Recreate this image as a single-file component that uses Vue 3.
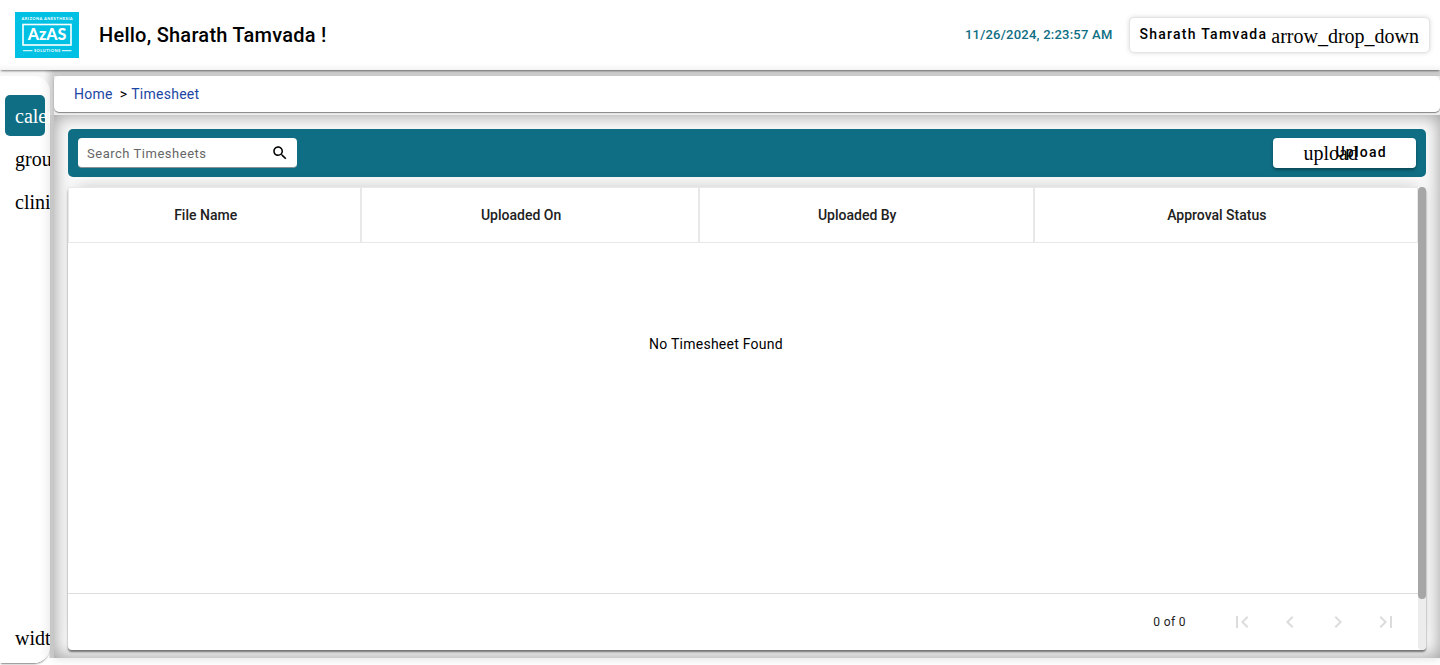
<script setup>
import { ref } from 'vue'

const userName = 'Sharath Tamvada'
const timestamp = '11/26/2024, 2:23:57 AM'
const search = ref('')
const navItems = [
  { icon: 'calendar_month', active: true },
  { icon: 'groups', active: false },
  { icon: 'clinical_notes', active: false },
]
const columns = [
  { label: 'File Name', key: 'file' },
  { label: 'Uploaded On', key: 'on' },
  { label: 'Uploaded By', key: 'by' },
  { label: 'Approval Status', key: 'status' },
]
const pagerButtons = [
  { label: 'First page', d: 'M18.41 16.59L13.82 12l4.59-4.59L17 6l-6 6 6 6zM6 6h2v12H6z' },
  { label: 'Previous page', d: 'M15.41 7.41L14 6l-6 6 6 6 1.41-1.41L10.83 12z' },
  { label: 'Next page', d: 'M10 6L8.59 7.41 13.17 12l-4.58 4.59L10 18l6-6z' },
  { label: 'Last page', d: 'M5.59 7.41L10.18 12l-4.59 4.59L7 18l6-6-6-6zM16 6h2v12h-2z' },
]
</script>

<template>
  <div class="page">
    <header class="topbar">
      <svg class="logo" viewBox="0 0 64 46" role="img" aria-label="AzAS">
        <rect width="64" height="46" fill="#00c0e4" />
        <rect x="8" y="12.5" width="48" height="20.5" fill="none" stroke="#fff" stroke-width="1.6" />
        <text x="32.300" y="8.400" text-anchor="middle" class="logo-small">ARIZONA ANESTHESIA</text>
        <text x="32" y="28.300" text-anchor="middle" class="logo-main">AzAS</text>
        <text x="32.300" y="40" text-anchor="middle" class="logo-small">SOLUTIONS</text>
        <path d="M8 38.700h9.500M47 38.700h9.500" stroke="#fff" stroke-width="1" />
      </svg>
      <h1 class="greeting">Hello, {{ userName }} !</h1>
      <time class="clock">{{ timestamp }}</time>
      <button class="user" type="button">
        <span>{{ userName }}</span>
        <span class="ligature">arrow_drop_down</span>
      </button>
    </header>

    <div class="body">
      <nav class="sidebar" aria-label="Main">
        <button
          v-for="item in navItems"
          :key="item.icon"
          type="button"
          class="nav-item ligature"
          :class="{ active: item.active }"
        >{{ item.icon }}</button>
        <button type="button" class="nav-item nav-toggle ligature">width</button>
      </nav>

      <main class="main">
        <nav class="crumbs" aria-label="Breadcrumb">
          <a href="#home">Home</a>
          <span>&gt;</span>
          <a href="#timesheet">Timesheet</a>
        </nav>

        <section class="panel">
          <div class="toolbar">
            <label class="search">
              <input v-model="search" type="text" placeholder="Search Timesheets" aria-label="Search Timesheets" />
              <svg viewBox="0 0 24 24" aria-hidden="true">
                <path d="M15.500 14h-.79l-.28-.27C15.410 12.590 16 11.110 16 9.500 16 5.910 13.090 3 9.500 3S3 5.910 3 9.500 5.910 16 9.500 16c1.610 0 3.090-.59 4.230-1.570l.27.28v.79l5 4.990L20.490 19l-4.990-5zm-6 0C7.010 14 5 11.990 5 9.500S7.010 5 9.500 5 14 7.010 14 9.500 11.990 14 9.500 14z" />
              </svg>
            </label>
            <button class="upload" type="button">
              <span class="upload-icon ligature">upload</span>
              <span>Upload</span>
            </button>
          </div>

          <div class="card">
            <div class="card-content">
              <div class="table-area">
                <table>
                  <colgroup>
                    <col v-for="c in columns" :key="c.key" :class="'col-' + c.key" />
                  </colgroup>
                  <thead>
                    <tr>
                      <th v-for="c in columns" :key="c.key" scope="col">{{ c.label }}</th>
                    </tr>
                  </thead>
                </table>
                <p class="empty">No Timesheet Found</p>
              </div>
              <footer class="pager">
                <span class="range">0 of 0</span>
                <button v-for="b in pagerButtons" :key="b.label" type="button" disabled :aria-label="b.label">
                  <svg viewBox="0 0 24 24" aria-hidden="true"><path :d="b.d" /></svg>
                </button>
              </footer>
            </div>
            <div class="track"><div class="thumb"></div></div>
          </div>
        </section>
      </main>
    </div>
  </div>
</template>

<style>
body {
  background: #fff;
}
</style>

<style scoped>
.page {
  box-sizing: border-box;
  height: 100vh;
  display: flex;
  flex-direction: column;
  overflow: hidden;
  font-family: Roboto, "Liberation Sans", sans-serif;
  color: #000;
}
.page * {
  box-sizing: border-box;
}
button {
  border: 0;
  padding: 0;
  margin: 0;
  background: none;
  font: inherit;
  color: inherit;
  cursor: pointer;
}
.ligature {
  font-family: "Liberation Serif", serif;
  font-size: 20px;
  font-weight: 400;
  letter-spacing: 0;
  line-height: 20px;
  white-space: nowrap;
}
.topbar {
  flex: none;
  position: relative;
  z-index: 2;
  display: flex;
  align-items: center;
  height: 70px;
  padding: 0 10px 0 15px;
  background: linear-gradient(#fff 64px, #f4f4f4);
  box-shadow: 0 2px 2px -1px rgba(0, 0, 0, 0.5);
}
.logo {
  width: 64px;
  height: 46px;
}
.logo-small {
  font: 700 4px Lato, sans-serif;
  letter-spacing: 0.12em;
  fill: #fff;
}
.logo-main {
  font: 900 16px Lato, sans-serif;
  fill: #fff;
}
.greeting {
  margin: 0 auto 0 20px;
  font-size: 20px;
  font-weight: 500;
  line-height: 24px;
  letter-spacing: 0.0125em;
}
.clock {
  margin-right: 16px;
  padding-bottom: 2px;
  color: #0f6e84;
  font-size: 13px;
  font-weight: 500;
  letter-spacing: 0.018em;
}
.user {
  display: flex;
  align-items: center;
  gap: 4px;
  height: 36px;
  padding: 0 10px 2px;
  border: 1px solid #e4e4e4;
  border-radius: 5px;
  background: #fff;
  box-shadow: 0 0 5px rgba(0, 0, 0, 0.14);
  font-size: 14px;
  font-weight: 500;
  letter-spacing: 0.09em;
}
.user .ligature {
  padding-top: 3px;
}
.body {
  flex: 1;
  min-height: 0;
  display: flex;
  gap: 4px;
  padding-top: 6px;
  background:
    linear-gradient(90deg, #f5f5f5 44px, #cfcfcf 54px) 0 0 / 100% 45px no-repeat,
    linear-gradient(90deg, #fff 49px, #cfcfcf 50px, #cfcfcf 54px, #fff 54px) 0 0 / 100% calc(100% - 7px) no-repeat;
}
.sidebar {
  flex: none;
  display: flex;
  flex-direction: column;
  gap: 2px;
  width: 50px;
  margin-bottom: 2px;
  padding: 19px 5px 5px;
  overflow: hidden;
  background: linear-gradient(90deg, #fff 40px, #f3f3f3);
  border-radius: 0 16px 16px 0;
  box-shadow: 0 2px 2px -1px rgba(0, 0, 0, 0.5);
}
.nav-item {
  flex: none;
  width: 40px;
  height: 41px;
  padding-left: 10px;
  border-radius: 5px;
  text-align: left;
}
.nav-item.active {
  background: #0f6e84;
  color: #fff;
}
.nav-toggle {
  margin-top: auto;
}
.main {
  flex: 1;
  min-width: 0;
  display: flex;
  flex-direction: column;
  margin-bottom: 7px;
  box-shadow: 0 2px 8px rgba(0, 0, 0, 0.1);
  background: #eee;
}
.crumbs {
  flex: none;
  display: flex;
  align-items: center;
  gap: 4px;
  height: 36px;
  margin-bottom: 3px;
  padding: 0 20px;
  background: #fff;
  border-radius: 5px;
  box-shadow: 0 1px 1px rgba(0, 0, 0, 0.45);
  font-size: 14px;
  letter-spacing: 0.018em;
}
.crumbs a {
  color: #1c46a4;
  text-decoration: none;
}
.crumbs span {
  padding-left: 3px;
}
.panel {
  flex: 1;
  min-height: 0;
  display: flex;
  flex-direction: column;
  gap: 10px;
  padding: 14px 14px 8px;
  background: #fbfbfb;
  box-shadow: inset 0 0 18px rgba(0, 0, 0, 0.4);
}
.toolbar {
  flex: none;
  display: flex;
  justify-content: space-between;
  align-items: center;
  height: 48px;
  padding: 0 10px;
  background: #0f6e84;
  border-radius: 5px;
}
.search {
  display: flex;
  align-items: center;
  width: 219px;
  height: 30px;
  padding: 0 8px 0 9px;
  background: #fff;
  border-radius: 4px;
  border-bottom: 1px solid #8a9295;
}
.search input {
  flex: 1;
  min-width: 0;
  padding: 2px 0 0;
  border: 0;
  outline: 0;
  background: none;
  font: 400 13px/20px Roboto, sans-serif;
  letter-spacing: 0.04em;
}
.search input::placeholder {
  color: #666;
  opacity: 1;
}
.search svg {
  width: 18px;
  height: 18px;
}
.upload {
  display: flex;
  align-items: center;
  height: 30px;
  padding: 0 29px 2px 30px;
  background: #fff;
  border-radius: 4px;
  box-shadow: 0 2px 3px rgba(0, 0, 0, 0.35);
  font-size: 14px;
  font-weight: 500;
  line-height: 20px;
  letter-spacing: 0.09em;
}
.upload-icon {
  width: 32px;
  padding-top: 2px;
  text-align: left;
}
.card {
  flex: 1;
  min-height: 0;
  display: flex;
  background: #fff;
  border-radius: 4px;
  box-shadow:
    0 2px 2px rgba(0, 0, 0, 0.5),
    0 -8px 16px -8px rgba(0, 0, 0, 0.2);
}
.card-content {
  flex: 1;
  min-width: 0;
  display: flex;
  flex-direction: column;
}
.table-area {
  flex: 1;
  min-height: 0;
  border-bottom: 1px solid #dedede;
}
table {
  width: 100%;
  border-collapse: separate;
  border-spacing: 0;
  table-layout: fixed;
}
.col-file {
  width: 21.8%;
}
.col-on {
  width: 25%;
}
.col-by {
  width: 24.8%;
}
.col-status {
  width: 28.4%;
}
th {
  height: 56px;
  padding: 0 18px 0 0;
  border: solid #e8e8e8;
  border-width: 1px 2px 1px 0;
  color: #212121;
  font-size: 14px;
  font-weight: 500;
  line-height: 20px;
  text-align: center;
}
th:first-child {
  border-left: 1px solid #e8e8e8;
}
th:last-child {
  border-right-width: 1px;
}
.empty {
  margin: 91px 54px 0 0;
  text-align: center;
  font-size: 14px;
  line-height: 20px;
  letter-spacing: 0.018em;
}
.pager {
  flex: none;
  display: flex;
  align-items: center;
  justify-content: flex-end;
  height: 56px;
  padding-right: 8px;
  color: #212121;
  font-size: 12px;
  letter-spacing: 0.033em;
}
.range {
  margin-right: 32px;
}
.pager button {
  display: flex;
  align-items: center;
  justify-content: center;
  width: 48px;
  height: 48px;
  cursor: default;
}
.pager svg {
  width: 24px;
  height: 24px;
  fill: #dcdcdc;
}
.track {
  flex: none;
  width: 8px;
  background: #ececec;
  border-radius: 4px;
}
.thumb {
  height: 89%;
  background: #a6a6a6;
  border-radius: 4px;
}
</style>
